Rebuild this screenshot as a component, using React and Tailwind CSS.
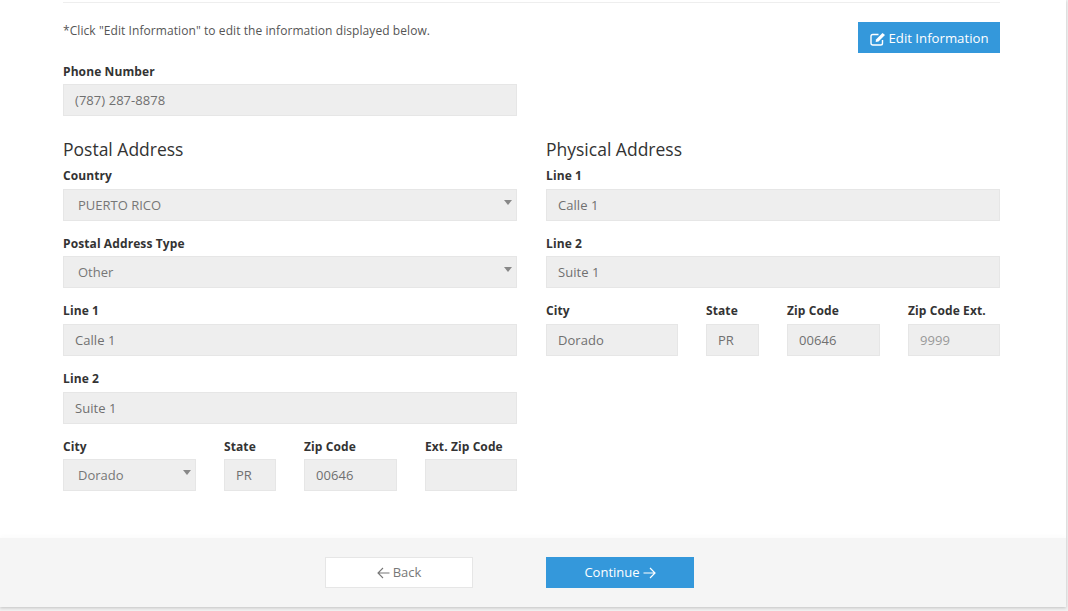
import React from "react";

const Label = ({ children }) => (
  <div className="h-[14px] text-[12px] leading-[14px] font-bold tracking-[0.1px] text-[#333]">{children}</div>
);

const Field = ({ label, value, select, muted, gap = "mt-[5px]", className = "" }) => (
  <div className={className}>
    <Label>{label}</Label>
    {select ? (
      <div className={`relative ${gap} h-[32px] border border-[#e6e6e6] bg-[#eeeeee] pl-[14px] text-[13px] leading-[31px] text-[#777]`}>
        {value}
        <span className="absolute right-[4px] top-[10px] h-0 w-0 border-x-[4px] border-t-[5px] border-x-transparent border-t-[#888]" />
      </div>
    ) : (
      <div className={`${gap} h-[32px] border border-[#e6e6e6] bg-[#eeeeee] pl-[11px] text-[13px] leading-[31px] tracking-[0.05px] ${muted ? "text-[#999]" : "text-[#707070]"}`}>
        {value}
      </div>
    )}
  </div>
);

const ArrowLeft = () => (
  <svg width="13" height="12" viewBox="0 0 13 12" fill="none" stroke="currentColor" strokeWidth="1.1">
    <path d="M12.5 6H1M6 1 1 6l5 5" />
  </svg>
);

const ArrowRight = () => (
  <svg width="13" height="12" viewBox="0 0 13 12" fill="none" stroke="currentColor" strokeWidth="1.2">
    <path d="M.5 6H12M7 1l5 5-5 5" />
  </svg>
);

const EditIcon = () => (
  <svg width="16" height="14" viewBox="0 0 16 14" fill="none" stroke="currentColor" strokeWidth="1.4">
    <path d="M12.5 8v3.2c0 1-.7 1.8-1.8 1.8H2.8C1.7 13 1 12.2 1 11.2V4.3c0-1 .7-1.8 1.8-1.8H8.5" />
    <path d="M6 7.5 12.5 1l2.5 2-6.5 6.5-2.8.4z" fill="currentColor" stroke="none" />
  </svg>
);

export default function App() {
  return (
    <div
      className="h-[611px] w-[1068px] overflow-hidden bg-[#f1f1f1] text-[#333]"
      style={{ fontFamily: '"Open Sans", sans-serif' }}
    >
      <div className="h-[607px] w-[1066px] bg-white shadow-[0_1px_3px_rgba(0,0,0,0.2)]">
        <div className="h-[538px] px-[63px] pr-[66px] pt-[2px]">
          <div className="h-[1px] bg-[#eeeeee]" />
          <div className="flex h-[50px] items-start justify-between">
            <p className="pt-[19px] text-[12px] leading-[18px] tracking-[0.075px] text-[#555]">*Click "Edit Information" to edit the information displayed below.</p>
            <button className="mt-[19px] flex h-[31px] w-[142px] items-center justify-center gap-[3px] bg-[#3498db] pt-[2px] text-[13.2px] text-white">
              <EditIcon />
              Edit Information
            </button>
          </div>
          <Field className="mt-[12px] w-[454px]" label="Phone Number" value="(787) 287-8878" />
          <div className="mt-[22px] grid grid-cols-[454px_454px] gap-x-[29px]">
            <div>
              <h2 className="h-[22px] text-[17.5px] leading-[22px] text-[#333]">Postal Address</h2>
              <Field className="mt-[9px]" gap="mt-[6px]" label="Country" value="PUERTO RICO" select />
              <Field className="mt-[16px]" label="Postal Address Type" value="Other" select />
              <Field className="mt-[16px]" gap="mt-[6px]" label="Line 1" value="Calle 1" />
              <Field className="mt-[16px]" gap="mt-[6px]" label="Line 2" value="Suite 1" />
              <div className="mt-[16px] flex gap-[28px]">
                <Field className="w-[133px]" label="City" value="Dorado" select />
                <Field className="w-[52px]" label="State" value="PR" />
                <Field className="w-[93px]" label="Zip Code" value="00646" />
                <Field className="w-[92px]" label="Ext. Zip Code" value="" />
              </div>
            </div>
            <div>
              <h2 className="h-[22px] text-[17.5px] leading-[22px] text-[#333]">Physical Address</h2>
              <Field className="mt-[9px]" gap="mt-[6px]" label="Line 1" value="Calle 1" />
              <Field className="mt-[16px]" label="Line 2" value="Suite 1" />
              <div className="mt-[16px] flex gap-[28px]">
                <Field className="w-[132px]" gap="mt-[6px]" label="City" value="Dorado" />
                <Field className="w-[53px]" gap="mt-[6px]" label="State" value="PR" />
                <Field className="w-[93px]" gap="mt-[6px]" label="Zip Code" value="00646" />
                <Field className="w-[92px]" gap="mt-[6px]" label="Zip Code Ext." value="9999" muted />
              </div>
            </div>
          </div>
        </div>
        <div className="flex h-[69px] justify-center gap-[73px] bg-[#f5f5f5] pt-[19px] pr-[47px] shadow-[0_-2px_4px_rgba(0,0,0,0.02)]">
          <button className="flex h-[31px] w-[148px] items-center justify-center gap-[3px] border border-[#e6e6e6] bg-white text-[13px] text-[#777]">
            <ArrowLeft />
            Back
          </button>
          <button className="flex h-[31px] w-[148px] items-center justify-center gap-[3px] bg-[#3498db] text-[13px] text-white">
            Continue
            <ArrowRight />
          </button>
        </div>
      </div>
    </div>
  );
}
